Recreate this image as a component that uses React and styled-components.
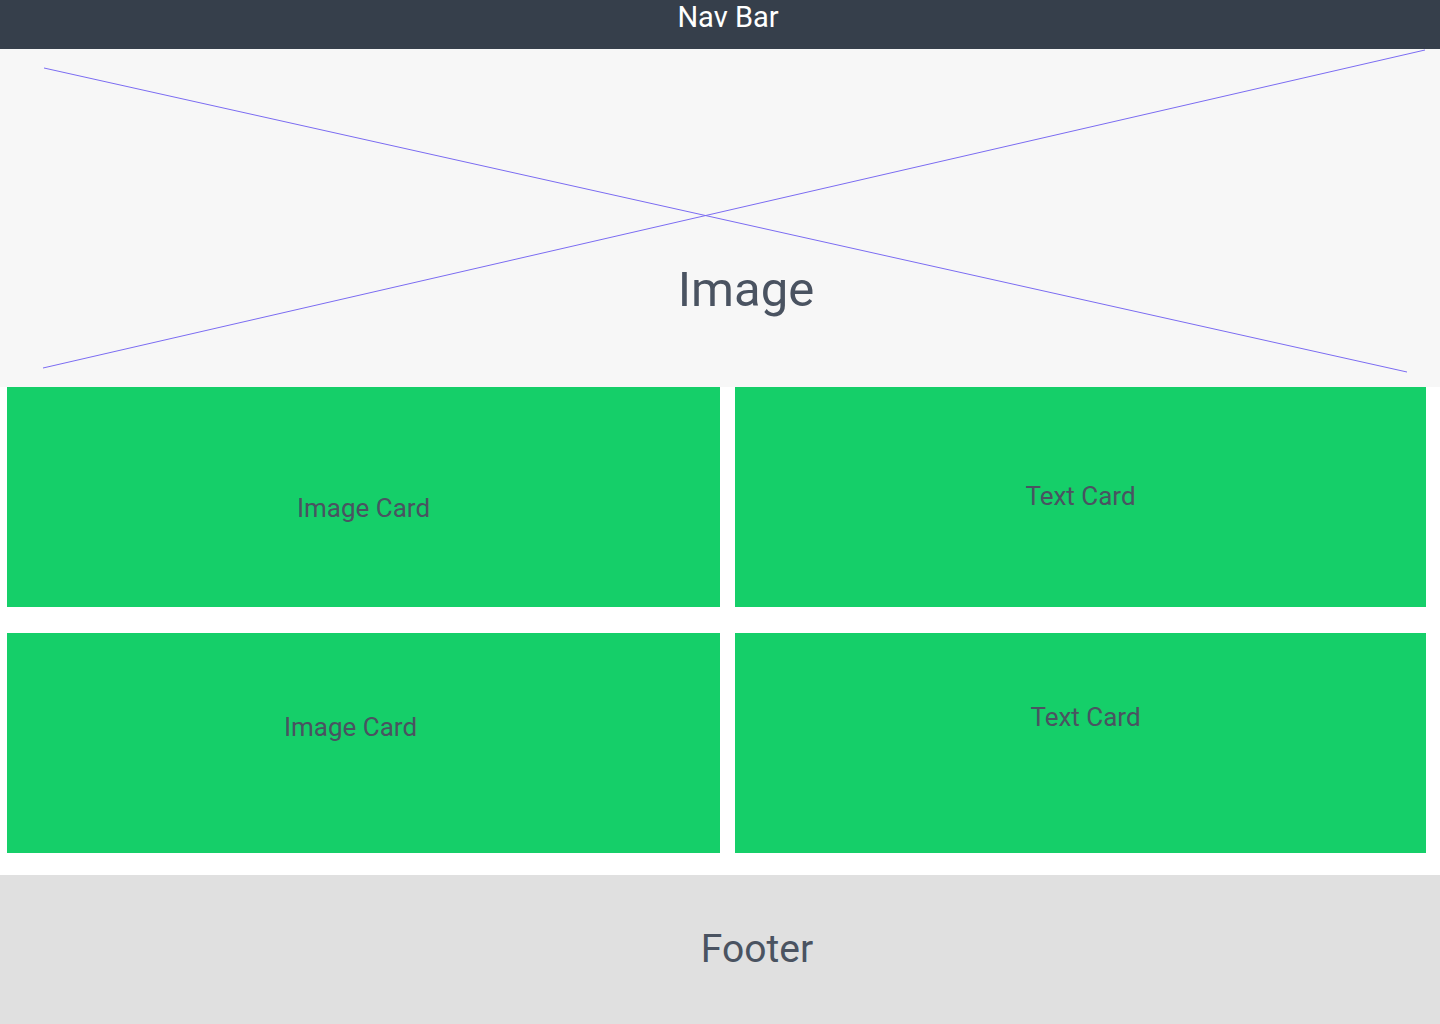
import React from "react";
import styled, { createGlobalStyle } from "styled-components";

const GlobalStyle = createGlobalStyle`
  html, body {
    margin: 0;
    padding: 0;
    background: #ffffff;
    font-family: Roboto, "Liberation Sans", sans-serif;
  }
`;

const cards = [
  { label: "Image Card", dx: 0, dy: 11 },
  { label: "Text Card", dx: 0, dy: -1 },
  { label: "Image Card", dx: -13, dy: -16 },
  { label: "Text Card", dx: 5, dy: -26 },
];

export default function App() {
  return (
    <>
      <GlobalStyle />
      <Page>
        <NavBar>Nav Bar</NavBar>
        <Hero>
          <Cross viewBox="0 0 1440 338" preserveAspectRatio="none">
            <line x1="44" y1="19" x2="1407" y2="323" />
            <line x1="43" y1="319" x2="1425" y2="1" />
          </Cross>
          <HeroTitle>Image</HeroTitle>
        </Hero>
        <CardGrid>
          {cards.map((card, i) => (
            <Card key={i}>
              <CardLabel $dx={card.dx} $dy={card.dy}>
                {card.label}
              </CardLabel>
            </Card>
          ))}
        </CardGrid>
        <Footer>
          <FooterText>Footer</FooterText>
        </Footer>
      </Page>
    </>
  );
}

const Page = styled.div`
  width: 1440px;
  min-height: 1024px;
  display: flex;
  flex-direction: column;
`;

const NavBar = styled.header`
  height: 49px;
  box-sizing: border-box;
  background: #363f4b;
  color: #ffffff;
  font-size: 29px;
  line-height: 34px;
  text-align: center;
  padding: 0 0 0 16px;
`;

const Hero = styled.section`
  position: relative;
  height: 338px;
  box-sizing: border-box;
  background: #f7f7f7;
  padding: 212px 0 0 52px;
  text-align: center;
`;

const Cross = styled.svg`
  position: absolute;
  inset: 0;
  width: 100%;
  height: 100%;

  line {
    stroke: #7b6cf2;
    stroke-width: 1;
  }
`;

const HeroTitle = styled.h1`
  position: relative;
  margin: 0;
  font-size: 49px;
  line-height: 58px;
  font-weight: 400;
  color: #4a5361;
`;

const CardGrid = styled.main`
  display: grid;
  grid-template-columns: 713px 691px;
  grid-auto-rows: 220px;
  column-gap: 15px;
  row-gap: 26px;
  padding: 0 14px 22px 7px;
`;

const Card = styled.div`
  background: #15cf69;
  display: flex;
  align-items: center;
  justify-content: center;
`;

const CardLabel = styled.span`
  font-size: 26px;
  line-height: 30px;
  color: #4a5361;
  transform: translate(${({ $dx }) => $dx}px, ${({ $dy }) => $dy}px);
`;

const Footer = styled.footer`
  flex: 1;
  background: #e0e0e0;
  display: flex;
  align-items: center;
  justify-content: center;
  padding-left: 74px;
`;

const FooterText = styled.span`
  font-size: 39px;
  line-height: 46px;
  color: #4a5361;
  margin-top: -2px;
`;
